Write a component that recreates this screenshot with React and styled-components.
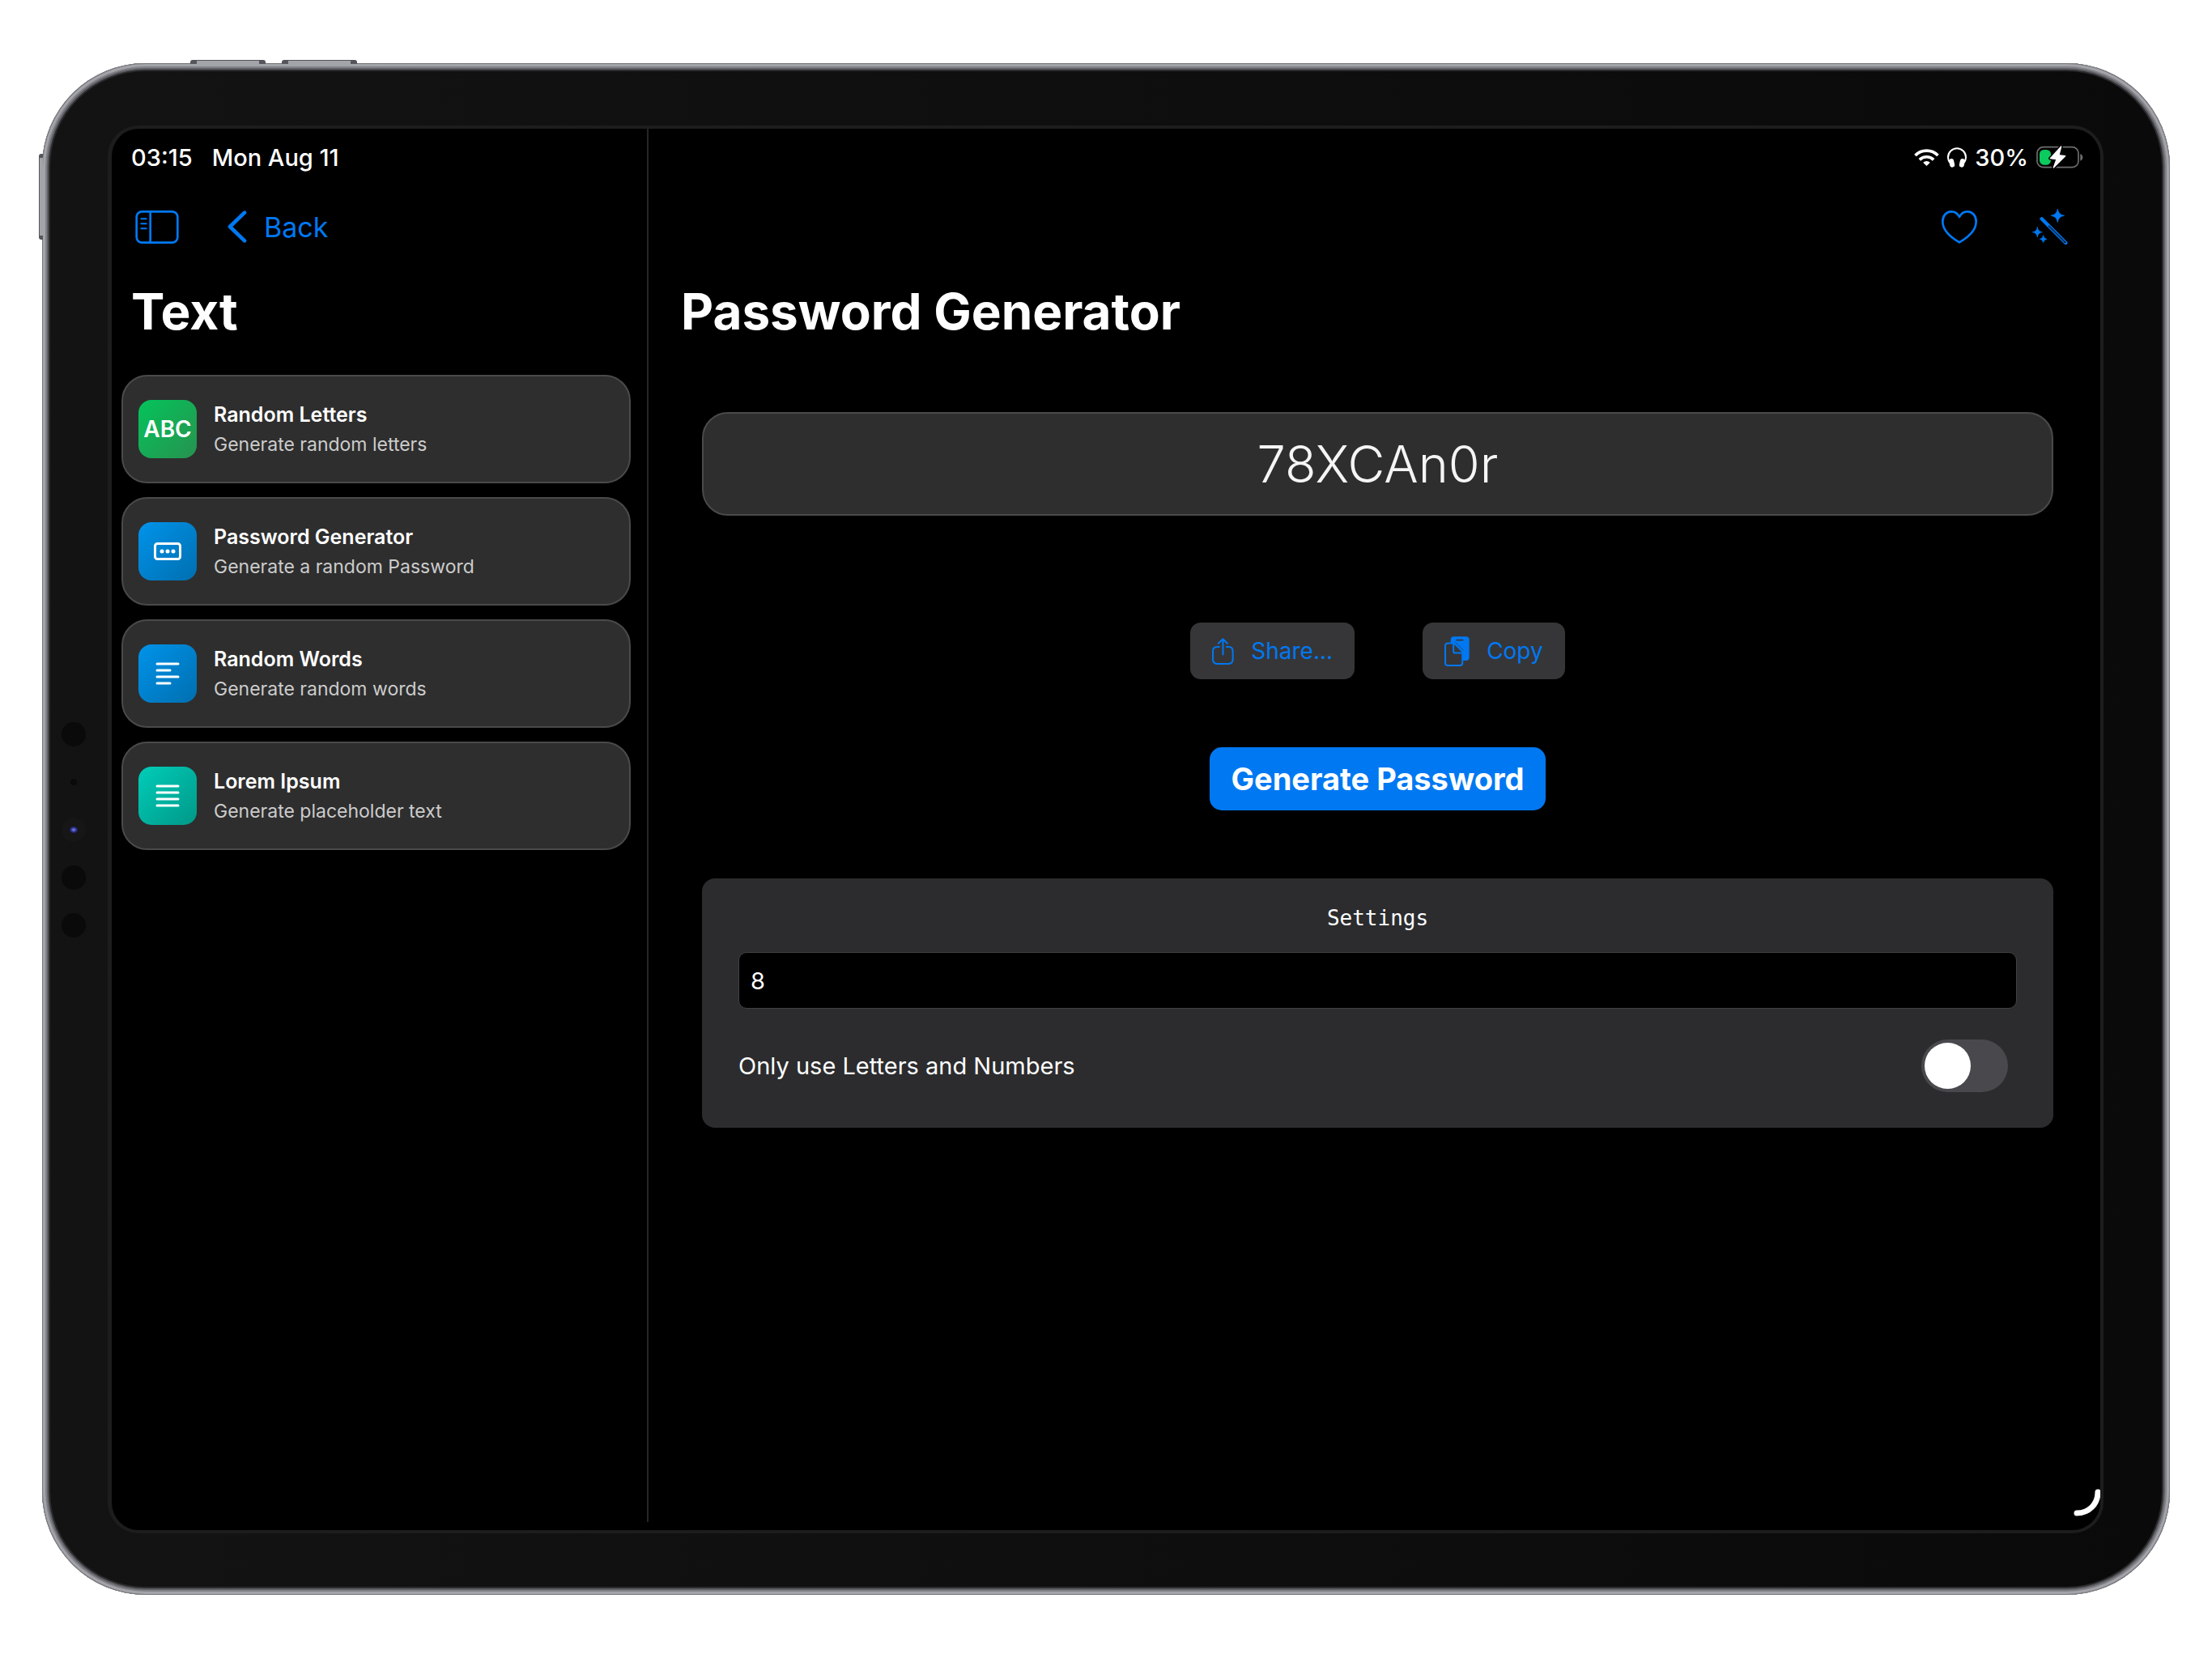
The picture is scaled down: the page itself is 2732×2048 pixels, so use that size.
import React, { useState } from 'react';
import styled, { createGlobalStyle } from 'styled-components';

const blue = '#0078f2';

const GlobalStyle = createGlobalStyle`
  *, *::before, *::after {
    box-sizing: border-box;
  }

  body {
    margin: 0;
    background: #ffffff;
    color: #ffffff;
    font-family: Inter, "Liberation Sans", sans-serif;
    font-size: 29px;
  }

  button, input {
    font: inherit;
  }

  button {
    border: 0;
    cursor: pointer;
  }
`

const Page = styled.div`
  display: flex;
  min-height: 100vh;
  padding: 78px 52px;
`

const Device = styled.div`
  position: relative;
  display: flex;
  flex: 1;
  padding: 10px;
  border-radius: 128px;
  background: #2c2c2e;
  box-shadow:
    inset 0 0 0 1px #77787c,
    inset 0 0 0 4px #a3a4a9,
    inset 0 0 0 6px #818287,
    inset 0 0 0 8px #5f6065;
`

const TopKey = styled.span`
  position: absolute;
  top: -4px;
  left: ${props => props.$left}px;
  width: 93px;
  height: 5px;
  border-radius: 3px 3px 0 0;
  border: solid #55565c;
  border-width: 1px 8px 0;
  background: #a3a4a9;
`

const SideKey = styled.span`
  position: absolute;
  top: 112px;
  left: -4px;
  width: 5px;
  height: 106px;
  border-radius: 3px 0 0 3px;
  border: solid #55565c;
  border-width: 5px 0 5px 1px;
  background: #a3a4a9;
`

const Bezel = styled.div`
  display: flex;
  flex: 1;
  padding: 67px 72px 66px 0;
  border-radius: 118px;
  background: linear-gradient(90deg, #131313, #0a0a0a);
`

const Sensors = styled.div`
  display: flex;
  flex-direction: column;
  align-items: center;
  justify-content: center;
  gap: 29px;
  width: 71px;
  padding-right: 14px;
`

const Sensor = styled.span`
  display: flex;
  align-items: center;
  justify-content: center;
  width: 30px;
  height: 30px;
  border-radius: 50%;
  background: ${props => props.$color};
`

const Mic = styled.span`
  width: 8px;
  height: 8px;
  border-radius: 50%;
  background: #0a0a0a;
`

const Lens = styled.span`
  width: 10px;
  height: 8px;
  border-radius: 50%;
  background: radial-gradient(#7f8cf0, #2a2a86 50%, #17171c);
`

const Screen = styled.div`
  position: relative;
  display: flex;
  flex: 1;
  overflow: hidden;
  border: solid #1d1d1d;
  border-width: 4px 4px 4px 5px;
  border-radius: 38px;
  background: #000000;
`

const Sidebar = styled.aside`
  width: 663px;
  margin-bottom: 10px;
  border-right: 2px solid #262628;
`

const Main = styled.main`
  flex: 1;
`

const StatusBar = styled.div`
  display: flex;
  align-items: center;
  justify-content: ${props => props.$end ? 'flex-end' : 'flex-start'};
  gap: ${props => props.$end ? 10 : 24}px;
  height: 70px;
  padding: 0 21px 0 24px;
  font-weight: 500;
`

const Toolbar = styled.div`
  display: flex;
  align-items: center;
  justify-content: ${props => props.$end ? 'flex-end' : 'flex-start'};
  gap: ${props => props.$end ? 68 : 60}px;
  height: 102px;
  padding: 0 40px 0 29px;
`

const ToolButton = styled.button`
  display: flex;
  align-items: center;
  gap: 21px;
  padding: 0;
  background: none;
  color: ${blue};
  font-size: 34px;
`

const Title = styled.h1`
  margin: 0;
  padding: 16px ${props => props.$inset}px 0;
  font-size: 62px;
  font-weight: 700;
  line-height: 76px;
`

const ToolList = styled.nav`
  display: flex;
  flex-direction: column;
  gap: 17px;
  padding: 40px 20px 0 12px;
`

const ToolCard = styled.a`
  display: flex;
  align-items: center;
  gap: 21px;
  height: 134px;
  padding: 0 19px;
  border: 2px solid #4a4a4b;
  border-radius: 32px;
  background: #2e2e2e;
  color: #ffffff;
  text-decoration: none;
`

const Tile = styled.span`
  display: flex;
  align-items: center;
  justify-content: center;
  width: 72px;
  height: 72px;
  border-radius: 16px;
  background: linear-gradient(135deg, ${props => props.$from}, ${props => props.$to});
  font-size: 28px;
  font-weight: 600;
`

const CardText = styled.span`
  display: flex;
  flex-direction: column;
  gap: 5px;
  line-height: 32px;
`

const CardName = styled.span`
  font-size: 25px;
  font-weight: 600;
`

const CardInfo = styled.span`
  color: #cccccc;
  font-size: 23px;
`

const Content = styled.div`
  display: flex;
  flex-direction: column;
  align-items: center;
  gap: 84px;
  padding: 86px 58px 0 66px;
`

const Result = styled.output`
  align-self: stretch;
  margin-bottom: 48px;
  border: 2px solid #4a4a4b;
  border-radius: 32px;
  background: #2e2e2e;
  color: #f5f5f5;
  font-size: 63px;
  font-weight: 350;
  line-height: 124px;
  text-align: center;
`

const Actions = styled.div`
  display: flex;
  align-items: center;
  gap: 84px;
`

const ActionButton = styled.button`
  display: flex;
  align-items: center;
  gap: 21px;
  height: 70px;
  padding: 0 27px;
  border-radius: 13px;
  background: #363638;
  color: ${blue};
  font-size: 28px;
`

const GenerateButton = styled.button`
  height: 78px;
  padding: 0 26px;
  border-radius: 15px;
  background: ${blue};
  color: #ffffff;
  font-size: 38px;
  font-weight: 700;
`

const Panel = styled.section`
  align-self: stretch;
  padding: 33px 45px 44px;
  border-radius: 16px;
  background: #2c2c2e;
`

const PanelTitle = styled.h2`
  margin: 0 0 26px;
  font-family: "DejaVu Sans Mono", "Liberation Mono", monospace;
  font-size: 26px;
  font-weight: 400;
  line-height: 32px;
  text-align: center;
`

const LengthInput = styled.input`
  display: block;
  width: 100%;
  height: 70px;
  padding: 0 14px;
  border: 1px solid #414143;
  border-radius: 10px;
  background: #000000;
  color: #ffffff;
`

const Option = styled.label`
  display: flex;
  align-items: center;
  justify-content: space-between;
  margin-top: 38px;
  padding-right: 11px;
`

const Switch = styled.input`
  display: flex;
  appearance: none;
  width: 107px;
  height: 65px;
  margin: 0;
  padding: 4px;
  border-radius: 33px;
  background: #49494d;
  cursor: pointer;

  &::before {
    content: "";
    width: 57px;
    height: 57px;
    border-radius: 50%;
    background: #ffffff;
  }

  &:checked {
    justify-content: flex-end;
    background: #30d158;
  }
`

const Corner = styled.svg`
  position: absolute;
  right: 0;
  bottom: 17px;
`

const WifiIcon = () => (
  <svg width="31" height="22" viewBox="0 0 92 66" fill="none" stroke="#fff" strokeWidth="11">
    <path d="M4 27A59 59 0 0 1 88 27" />
    <path d="M20 43A37 37 0 0 1 72 43" />
    <path d="M33 53A19 19 0 0 1 59 53L46 66Z" fill="#fff" stroke="none" />
  </svg>
)

const HeadphonesIcon = () => (
  <svg width="24" height="25" viewBox="0 0 72 75" fill="#fff">
    <path d="M9 56C5 50 3 44 3 37A33 33 0 0 1 69 37C69 44 67 50 63 56" fill="none" stroke="#fff" strokeWidth="6" />
    <rect x="8" y="42" width="18" height="32" rx="9" transform="rotate(-12 17 58)" />
    <rect x="46" y="42" width="18" height="32" rx="9" transform="rotate(12 55 58)" />
  </svg>
)

const BatteryIcon = () => (
  <svg width="58" height="28" viewBox="0 0 174 84">
    <rect x="3" y="5" width="153" height="75" rx="23" fill="none" stroke="#6e6e6e" strokeWidth="5" />
    <path d="M163 30c6 2 9 7 9 13s-3 11-9 13z" fill="#6e6e6e" />
    <rect x="12" y="15" width="42" height="56" rx="16" fill="#0bca5e" />
    <path d="M92 3L52 47L75 50L64 81L107 38L84 35Z" fill="#fff" stroke="#000" strokeWidth="13" strokeLinejoin="round" />
    <path d="M92 3L52 47L75 50L64 81L107 38L84 35Z" fill="#fff" stroke="#fff" strokeWidth="4" strokeLinejoin="round" />
  </svg>
)

const SidebarIcon = () => (
  <svg width="54" height="41" viewBox="0 0 160 123" fill="none" stroke="currentColor" strokeLinecap="round">
    <rect x="4" y="4" width="152" height="115" rx="20" strokeWidth="8" />
    <path d="M55 5V118" strokeWidth="8" strokeLinecap="butt" />
    <path d="M21 31H40M21 49H40M21 67H40" strokeWidth="6" />
  </svg>
)

const ChevronIcon = () => (
  <svg width="24" height="40" viewBox="0 0 72 120" fill="none" stroke="currentColor" strokeWidth="14" strokeLinecap="round" strokeLinejoin="round">
    <path d="M63 8L9 60L63 112" />
  </svg>
)

const HeartIcon = () => (
  <svg width="44" height="41" viewBox="0 0 132 123" fill="none" stroke="currentColor" strokeWidth="8" strokeLinejoin="round">
    <path d="M66 118C30 97 4 72 4 41C4 19 18 4 36 4C50 4 60 12 66 24C72 12 82 4 96 4C114 4 128 19 128 41C128 72 102 97 66 118Z" />
  </svg>
)

const WandIcon = () => (
  <svg width="44" height="44" viewBox="0 0 132 132" fill="currentColor" stroke="currentColor" strokeLinecap="round">
    <path d="M94 1Q97 22 119 25Q97 28 94 50Q91 28 69 25Q91 22 94 1Z" strokeWidth="2" />
    <path d="M19 68Q21 84 37 86Q21 88 19 105Q17 88 1 86Q17 84 19 68Z" strokeWidth="2" />
    <path d="M41 99Q43 110 54 112Q43 114 41 125Q39 114 28 112Q39 110 41 99Z" strokeWidth="2" />
    <path d="M35 37L124 126" strokeWidth="13" />
    <path d="M62 64L122 124" stroke="#000" strokeWidth="5" />
    <path d="M62 64L119 121" strokeWidth="2" />
  </svg>
)

const ShareIcon = () => (
  <svg width="27" height="33" viewBox="0 0 80 98" fill="none" stroke="currentColor" strokeWidth="6" strokeLinecap="round" strokeLinejoin="round">
    <path d="M26 33H19Q3 33 3 49V79Q3 95 19 95H60Q76 95 76 79V49Q76 33 60 33H53" />
    <path d="M40 5V61M23 20L40 4L56 20" />
  </svg>
)

const CopyIcon = () => (
  <svg width="31" height="37" viewBox="0 0 92 110" fill="none" strokeLinejoin="round">
    <rect x="23" y="1" width="68" height="88" rx="12" fill="currentColor" />
    <path d="M45 14H67" stroke="#363638" strokeWidth="5" strokeLinecap="round" />
    <path d="M14 25H35L66 56V98Q66 107 57 107H12Q3 107 3 98V35Q3 25 14 25Z" fill="#363638" stroke="currentColor" strokeWidth="6" />
    <path d="M33 26V54Q33 61 40 61H66" stroke="currentColor" strokeWidth="6" />
    <path d="M39 21L70 52" stroke="#363638" strokeWidth="2" />
  </svg>
)

const PasswordIcon = () => (
  <svg width="34" height="22" viewBox="0 0 68 44" fill="#fff">
    <rect x="3" y="3" width="62" height="38" rx="6" fill="none" stroke="#fff" strokeWidth="6" />
    <circle cx="20" cy="22" r="5" />
    <circle cx="34" cy="22" r="5" />
    <circle cx="48" cy="22" r="5" />
  </svg>
)

const LinesIcon = ({ short }) => (
  <svg width="30" height="28" viewBox="0 0 30 28" fill="none" stroke="#fff" strokeWidth="3" strokeLinecap="round">
    <path d={`M2 2H28M2 10H${short ? 18 : 28}M2 18H28M2 26H${short ? 18 : 28}`} />
  </svg>
)

const tools = [
  { name: 'Random Letters', info: 'Generate random letters', from: '#04c45b', to: '#27924f', icon: 'ABC' },
  { name: 'Password Generator', info: 'Generate a random Password', from: '#0093ea', to: '#006fb0', icon: <PasswordIcon /> },
  { name: 'Random Words', info: 'Generate random words', from: '#0093ea', to: '#006fb0', icon: <LinesIcon short /> },
  { name: 'Lorem Ipsum', info: 'Generate placeholder text', from: '#00cdb8', to: '#009888', icon: <LinesIcon /> },
]

const letters = 'ABCDEFGHIJKLMNOPQRSTUVWXYZabcdefghijklmnopqrstuvwxyz0123456789'

const createPassword = (length, plain) => {
  const chars = plain ? letters : letters + '!?#$%&*+-_'
  return Array.from({ length }, () => chars[Math.floor(Math.random() * chars.length)]).join('')
}

const App = () => {
  const [password, setPassword] = useState('78XCAn0r')
  const [length, setLength] = useState('8')
  const [plain, setPlain] = useState(false)

  return (
    <Page>
      <GlobalStyle />
      <Device>
        <TopKey $left={183} />
        <TopKey $left={296} />
        <SideKey />
        <Bezel>
          <Sensors>
            <Sensor $color="#0a0a0a" />
            <Sensor><Mic /></Sensor>
            <Sensor $color="#161617"><Lens /></Sensor>
            <Sensor $color="#0a0a0a" />
            <Sensor $color="#0a0a0a" />
          </Sensors>

          <Screen>
            <Sidebar>
              <StatusBar>
                <span>03:15</span>
                <span>Mon Aug 11</span>
              </StatusBar>
              <Toolbar>
                <ToolButton aria-label="Toggle sidebar"><SidebarIcon /></ToolButton>
                <ToolButton><ChevronIcon />Back</ToolButton>
              </Toolbar>
              <Title as="h2" $inset={24}>Text</Title>
              <ToolList>
                {tools.map(tool => (
                  <ToolCard key={tool.name} href="#">
                    <Tile $from={tool.from} $to={tool.to}>{tool.icon}</Tile>
                    <CardText>
                      <CardName>{tool.name}</CardName>
                      <CardInfo>{tool.info}</CardInfo>
                    </CardText>
                  </ToolCard>
                ))}
              </ToolList>
            </Sidebar>

            <Main>
              <StatusBar $end>
                <WifiIcon />
                <HeadphonesIcon />
                <span>30%</span>
                <BatteryIcon />
              </StatusBar>
              <Toolbar $end>
                <ToolButton aria-label="Favourite"><HeartIcon /></ToolButton>
                <ToolButton aria-label="Effects"><WandIcon /></ToolButton>
              </Toolbar>
              <Title $inset={40}>Password Generator</Title>

              <Content>
                <Result>{password}</Result>
                <Actions>
                  <ActionButton><ShareIcon />Share...</ActionButton>
                  <ActionButton><CopyIcon />Copy</ActionButton>
                </Actions>
                <GenerateButton onClick={() => setPassword(createPassword(Number(length) || 0, plain))}>
                  Generate Password
                </GenerateButton>
                <Panel>
                  <PanelTitle>Settings</PanelTitle>
                  <LengthInput
                    aria-label="Password length"
                    inputMode="numeric"
                    value={length}
                    onChange={e => setLength(e.target.value)} />
                  <Option>
                    Only use Letters and Numbers
                    <Switch
                      type="checkbox"
                      role="switch"
                      checked={plain}
                      onChange={e => setPlain(e.target.checked)} />
                  </Option>
                </Panel>
              </Content>
            </Main>

            <Corner width="33" height="34" viewBox="0 0 33 34" fill="none" stroke="#fff" strokeWidth="7" strokeLinecap="round">
              <path d="M30 4C30 19 19 30 4 30" />
            </Corner>
          </Screen>
        </Bezel>
      </Device>
    </Page>
  )
}

export default App;
